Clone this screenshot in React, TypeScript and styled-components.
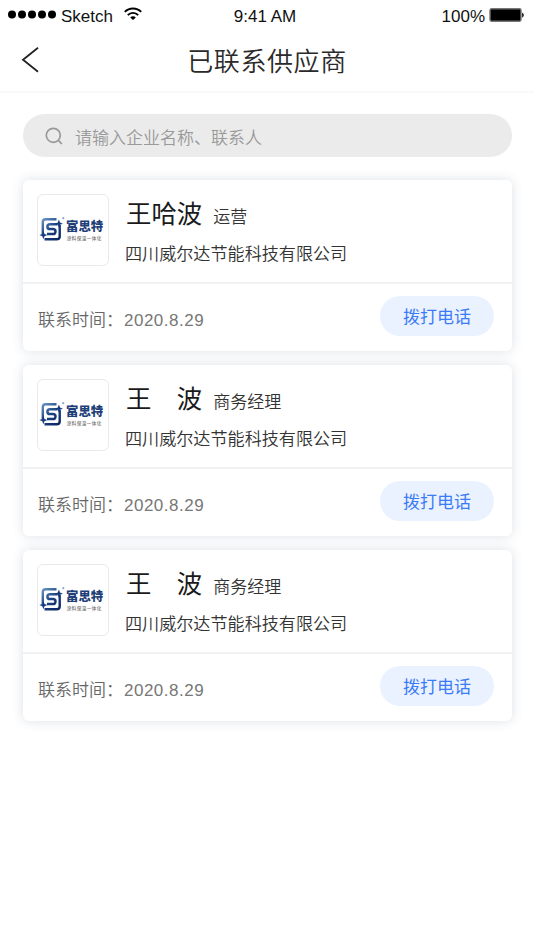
import React from 'react';
import styled, { createGlobalStyle } from 'styled-components';

const cjk = '"Noto Sans CJK SC", sans-serif';
const latin = '"Liberation Sans", "Noto Sans CJK SC", sans-serif';

const GlobalStyle = createGlobalStyle`
  *, *::before, *::after { box-sizing: border-box; }
  html, body { margin: 0; background: #fff; }
  body { font-family: ${cjk}; color: #2b2b2b; }
`;

const Screen = styled.div`
  width: 534px;
  height: 950px;
  display: flex;
  flex-direction: column;
  overflow: hidden;
  background: #fff;
`;

const StatusBar = styled.div`
  height: 32px;
  padding: 0 9px 0 8px;
  display: grid;
  grid-template-columns: 1fr auto 1fr;
  align-items: start;
  font: 17px/34px ${latin};
  color: #111;
`;

const Clock = styled.span`
  margin-right: 3px;
`;

const StatusGroup = styled.div<{ $end?: boolean }>`
  display: flex;
  align-items: flex-start;
  justify-content: ${p => (p.$end ? 'flex-end' : 'flex-start')};
  gap: ${p => (p.$end ? '4px' : '5px')};
  svg { display: block; flex: none; }
`;

const StatusIcon = styled.span<{ $top: number; $left?: number }>`
  padding-top: ${p => p.$top}px;
  padding-left: ${p => p.$left ?? 0}px;
`;

const NavBar = styled.header`
  height: 61px;
  padding: 0 21px;
  display: grid;
  grid-template-columns: 60px 1fr 60px;
  align-items: center;
  border-bottom: 2px solid #f9f9f9;
`;

const BackButton = styled.button`
  padding: 0 0 4px;
  border: 0;
  background: none;
  text-align: left;
  svg { display: block; }
`;

const Title = styled.h1`
  margin: 0;
  padding-bottom: 3px;
  font-size: 26px;
  line-height: 56px;
  font-weight: 350;
  letter-spacing: 0.6px;
  text-align: center;
  color: #2a2a2a;
`;

const SearchField = styled.div`
  height: 43px;
  margin: 21px 22px 0 23px;
  padding-left: 22px;
  display: flex;
  align-items: center;
  gap: 12px;
  border-radius: 22px;
  background: #ebebeb;
  color: #999;
  font-size: 17px;
  line-height: 43px;
  svg { display: block; }
`;

const Placeholder = styled.span`
  font-weight: 350;
  padding-top: 1px;
`;

const List = styled.main`
  padding: 23px 22px 0 23px;
  display: flex;
  flex-direction: column;
  gap: 14px;
`;

const Card = styled.article`
  height: 171px;
  border-radius: 6px;
  background: #fff;
  box-shadow: 0 0 12px rgba(40, 60, 100, 0.16);
`;

const CardTop = styled.div`
  height: 104px;
  padding: 14px 14px 0;
  display: flex;
  gap: 16px;
  border-bottom: 2px solid #f1f1f3;
`;

const LogoFrame = styled.div`
  width: 72px;
  height: 72px;
  flex: none;
  border: 1px solid #e9e9e9;
  border-radius: 6px;
  svg { display: block; }
`;

const Info = styled.div`
  display: flex;
  flex-direction: column;
`;

const NameRow = styled.div`
  height: 39px;
  display: flex;
  align-items: baseline;
  gap: 11px;
  padding-left: 1px;
  line-height: 36px;
  white-space: pre;
`;

const Name = styled.span`
  font-size: 25.4px;
  color: #1a1a1a;
`;

const Role = styled.span`
  font-size: 17px;
  font-weight: 350;
  color: #333;
`;

const Company = styled.div`
  font-size: 17.1px;
  font-weight: 350;
  line-height: 40px;
  color: #333;
`;

const CardBottom = styled.div`
  height: 67px;
  padding: 0 18px 0 15px;
  display: flex;
  justify-content: space-between;
  align-items: center;
`;

const Contacted = styled.div`
  padding-top: 4px;
  display: flex;
  align-items: baseline;
  font-size: 17px;
  font-weight: 350;
  line-height: 24px;
  color: #666;
`;

const DateText = styled.time`
  margin-left: 1px;
  font-family: ${latin};
  font-weight: 400;
  letter-spacing: 0.5px;
  color: #777;
`;

const CallButton = styled.button`
  width: 114px;
  height: 40px;
  margin-bottom: 3px;
  padding: 0;
  border: 0;
  border-radius: 20px;
  background: #ebf2ff;
  color: #3b7bf6;
  font: 400 17px/40px ${cjk};
`;

const SignalDots = () => (
  <svg width="48" height="10" viewBox="0 0 48 10" fill="#000">
    {[4, 14, 24, 34, 44].map(x => <circle key={x} cx={x} cy="4.5" r="4" />)}
  </svg>
);

const Wifi = () => (
  <svg width="18" height="14" viewBox="0 0 18 14" fill="none" stroke="#000" strokeWidth="1.9">
    <path d="M.8 4.9C5.3.3 12.7.3 17.2 4.9" />
    <path d="M3.8 8.1c2.8-3 7.6-3 10.4 0" />
    <path d="M6.2 10.4c1.6-1.5 4-1.5 5.6 0L9 13.1z" fill="#000" stroke="none" />
  </svg>
);

const Battery = () => (
  <svg width="36" height="14" viewBox="0 0 36 14">
    <rect x="1" y=".8" width="31" height="12.4" rx="1.4" fill="#000" stroke="#777" strokeWidth="1.4" />
    <path d="M33.2 4.8c2 .5 2 4.2 0 4.7z" fill="#000" />
  </svg>
);

const BackIcon = () => (
  <svg width="19" height="27" viewBox="0 0 19 27" fill="none" stroke="#222" strokeWidth="1.8">
    <path d="M17 1.7 2 13.8 17 25.7" />
  </svg>
);

const SearchIcon = () => (
  <svg width="18" height="18" viewBox="0 0 18 18" fill="none" stroke="#999" strokeWidth="1.7">
    <circle cx="8.3" cy="8.3" r="7" />
    <path d="m13.2 13.2 3.6 3.8" />
  </svg>
);

const CompanyLogo = () => (
  <svg width="70" height="70" viewBox="0 0 70 70">
    <defs>
      <linearGradient id="mark" gradientUnits="userSpaceOnUse" x1="4" y1="23" x2="22" y2="45">
        <stop offset="0" stopColor="#6d9cc9" />
        <stop offset=".5" stopColor="#1d4383" />
        <stop offset="1" stopColor="#0a2260" />
      </linearGradient>
    </defs>
    <g fill="none" stroke="url(#mark)">
      <path d="M18.5 24.3H7.5Q4.8 24.3 4.8 27v12M6.5 44.3h12q3.2 0 3.2-2.7V30" strokeWidth="2.4" />
      <path d="M19.5 29.3H12q-2.6 0-2.6 2.4t2.6 2.4h2.8q2.7 0 2.7 2.5T14.8 39H9" strokeWidth="2.5" />
    </g>
    <path d="m20.9 24.6 1.1 3 2.9 1.1-2.9 1.1-1.1 3-1.1-3-2.8-1.1 2.8-1.1zM5.4 36l1.1 3 2.9 1.1-2.9 1.1-1.1 3-1.1-3-2.9-1.1L4.3 39z" fill="#173b7c" />
    <circle cx="25.3" cy="23.2" r="1.1" fill="#8aa9c9" />
    <text x="28" y="35.9" fontFamily='"Noto Sans CJK SC", sans-serif' fontSize="12.4" fontWeight="900" fill="#1f3f78">富思特</text>
    <text x="28.8" y="44.6" textLength="34.5" fontFamily='"Noto Sans CJK SC", sans-serif' fontSize="4.6" fontWeight="500" fill="#777">涂料保温一体化</text>
  </svg>
);

const suppliers = [
  { name: '王哈波', role: '运营' },
  { name: '王　波', role: '商务经理' },
  { name: '王　波', role: '商务经理' },
];

export default function App() {
  return (
    <>
      <GlobalStyle />
      <Screen>
        <StatusBar>
          <StatusGroup>
            <StatusIcon $top={10}><SignalDots /></StatusIcon>
            <span>Sketch</span>
            <StatusIcon $top={7} $left={6}><Wifi /></StatusIcon>
          </StatusGroup>
          <Clock>9:41 AM</Clock>
          <StatusGroup $end>
            <span>100%</span>
            <StatusIcon $top={8}><Battery /></StatusIcon>
          </StatusGroup>
        </StatusBar>
        <NavBar>
          <BackButton aria-label="返回"><BackIcon /></BackButton>
          <Title>已联系供应商</Title>
        </NavBar>
        <SearchField>
          <SearchIcon />
          <Placeholder>请输入企业名称、联系人</Placeholder>
        </SearchField>
        <List>
          {suppliers.map((s, i) => (
            <Card key={i}>
              <CardTop>
                <LogoFrame><CompanyLogo /></LogoFrame>
                <Info>
                  <NameRow><Name>{s.name}</Name><Role>{s.role}</Role></NameRow>
                  <Company>四川威尔达节能科技有限公司</Company>
                </Info>
              </CardTop>
              <CardBottom>
                <Contacted>联系时间：<DateText>2020.8.29</DateText></Contacted>
                <CallButton>拨打电话</CallButton>
              </CardBottom>
            </Card>
          ))}
        </List>
      </Screen>
    </>
  );
}
